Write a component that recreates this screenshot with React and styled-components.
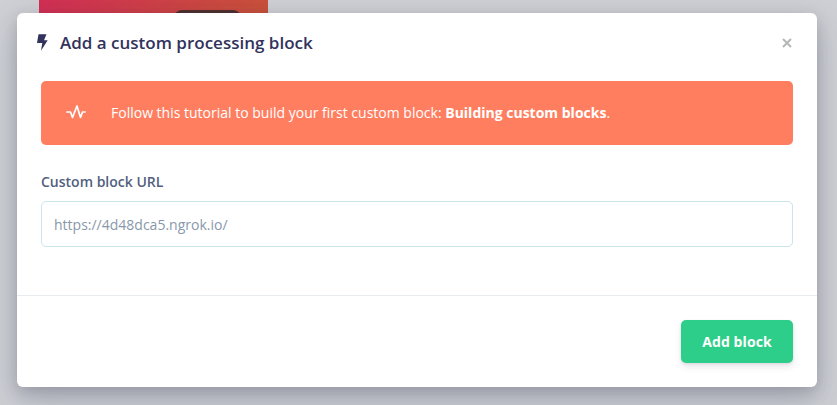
import React from "react";
import styled, { createGlobalStyle } from "styled-components";

const Global = createGlobalStyle`
  html, body { margin: 0; padding: 0; width: 837px; height: 405px; overflow: hidden; }
  body { background: #cdcfd4; font-family: "Open Sans", "Noto Sans", sans-serif; -webkit-font-smoothing: antialiased; }
  * { box-sizing: border-box; }
`;

const Page = styled.div`
  position: relative;
  width: 837px;
  height: 405px;
  padding: 13px 20px 18px 17px;
`;

const BehindCard = styled.div`
  position: absolute;
  left: 39px;
  top: 0;
  width: 229px;
  height: 13px;
  background: linear-gradient(100deg, #d12f54 0%, #c8513a 100%);
`;

const BehindPill = styled.div`
  position: absolute;
  left: 135px;
  top: 10px;
  width: 67px;
  height: 10px;
  border-radius: 8px 8px 0 0;
  background: #50302f;
`;

const Modal = styled.div`
  position: relative;
  width: 800px;
  height: 374px;
  background: #fff;
  border-radius: 6px;
  box-shadow: 0 15px 35px rgba(50, 50, 93, 0.2), 0 5px 15px rgba(0, 0, 0, 0.17);
  display: flex;
  flex-direction: column;
`;

const Header = styled.div`
  height: 68px;
  padding: 0 25px 9px 20px;
  display: flex;
  align-items: center;
`;

const Title = styled.h5`
  margin: 0 0 0 12px;
  flex: 1;
  font-size: 17px;
  line-height: 24px;
  font-weight: 600;
  color: #32325d;
`;

const Close = styled.svg`
  width: 10px;
  height: 10px;
  color: #b5b6b8;
`;

const Body = styled.div`
  flex: 1;
  padding: 0 24px;
`;

const Alert = styled.div`
  height: 64px;
  border-radius: 5px;
  background: #ff7e60;
  color: #fff;
  display: flex;
  align-items: center;
  padding: 0 25px;
  font-size: 14px;
`;

const AlertText = styled.span`
  margin-left: 25px;
  line-height: 20px;
  strong { font-weight: 700; }
`;

const Label = styled.label`
  display: block;
  margin-top: 27px;
  font-size: 14px;
  line-height: 19px;
  font-weight: 600;
  color: #525f7f;
`;

const Input = styled.input`
  display: block;
  width: 100%;
  height: 46px;
  margin-top: 10px;
  padding: 0 12px;
  border: 1px solid #cbe5ec;
  border-radius: 5px;
  outline: none;
  background: #fff;
  font-family: inherit;
  font-size: 14px;
  color: #8898aa;
`;

const Footer = styled.div`
  height: 92px;
  border-top: 1px solid #e9ecef;
  display: flex;
  align-items: flex-start;
  justify-content: flex-end;
  padding: 24px 24px 0;
`;

const Button = styled.button`
  width: 112px;
  height: 43px;
  border: 0;
  border-radius: 5px;
  background: #2dce89;
  color: #fff;
  font-family: inherit;
  font-size: 14px;
  font-weight: 700;
  letter-spacing: 0.1px;
  box-shadow: 0 4px 6px rgba(50, 50, 93, 0.11), 0 1px 3px rgba(0, 0, 0, 0.08);
`;

const Bolt = () => (
  <svg width="11" height="17" viewBox="0 0 11 17" fill="#32325d">
    <path d="M1.5 0.3H9.5L7 6.3H10.7L4 16.8L5.3 9H0Z" />
  </svg>
);

const Pulse = () => (
  <svg width="20" height="16" viewBox="0 0 20 16" fill="none" stroke="#fff" strokeWidth="1.7" strokeLinecap="round" strokeLinejoin="round">
    <path d="M0.8 7H4.5L6.5 12.5L11 1L14.5 12.5L16.5 7H19.2" />
  </svg>
);

export default function App() {
  return (
    <>
      <Global />
      <Page>
        <BehindCard><BehindPill /></BehindCard>
        <Modal>
          <Header>
            <Bolt />
            <Title>Add a custom processing block</Title>
            <Close viewBox="0 0 10 10" fill="none" stroke="currentColor" strokeWidth="2">
              <path d="M1 1L9 9M9 1L1 9" />
            </Close>
          </Header>
          <Body>
            <Alert>
              <Pulse />
              <AlertText>
                Follow this tutorial to build your first custom block: <strong>Building custom blocks</strong>.
              </AlertText>
            </Alert>
            <Label>Custom block URL</Label>
            <Input readOnly value="https://4d48dca5.ngrok.io/" />
          </Body>
          <Footer>
            <Button>Add block</Button>
          </Footer>
        </Modal>
      </Page>
    </>
  );
}
